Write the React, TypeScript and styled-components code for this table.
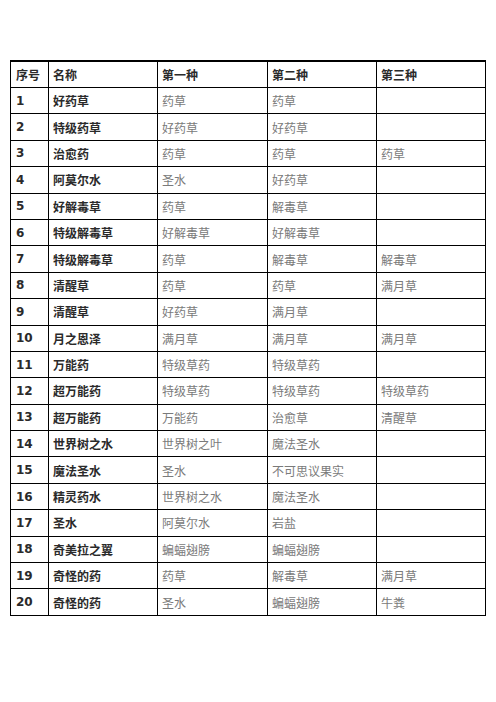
import React from 'react';
import styled, {createGlobalStyle} from 'styled-components';

const GlobalStyle = createGlobalStyle`
    html, body {
        margin:0;
        padding:0;
        background:#fff;
    }
    body {
        font-family:"DejaVu Sans", "Noto Sans CJK SC", sans-serif;
    }
`;

const Page = styled.div`
    padding:60px 0 0 10px;
    width:496px;
    height:702px;
    box-sizing:border-box;
`;

const Sheet = styled.div`
    display:grid;
    grid-template-columns:38px 109px 110px 109px 109px;
    grid-template-rows:26px;
    grid-auto-rows:26.4px;
    width:max-content;
    border-left:1px solid #000;
    border-top:2px solid #000;
`;

const Cell = styled.div<{kind:'head'|'key'|'plain'}>`
    display:flex;
    align-items:center;
    box-sizing:border-box;
    padding:0 0 0 4px;
    border-right:1px solid #000;
    border-bottom:1px solid #000;
    font-size:12px;
    white-space:nowrap;
    overflow:hidden;
    font-weight:${({kind})=> kind==='plain' ? 400 : 700};
    color:${({kind})=> kind==='plain' ? '#7a7a7a' : '#2a2a2a'};
`;

const NumCell = styled(Cell)`
    padding-left:5px;
`;

const headers = ['序号','名称','第一种','第二种','第三种'];

const rows:[string,string,string,string][] = [
    ['好药草','药草','药草',''],
    ['特级药草','好药草','好药草',''],
    ['治愈药','药草','药草','药草'],
    ['阿莫尔水','圣水','好药草',''],
    ['好解毒草','药草','解毒草',''],
    ['特级解毒草','好解毒草','好解毒草',''],
    ['特级解毒草','药草','解毒草','解毒草'],
    ['清醒草','药草','药草','满月草'],
    ['清醒草','好药草','满月草',''],
    ['月之恩泽','满月草','满月草','满月草'],
    ['万能药','特级草药','特级草药',''],
    ['超万能药','特级草药','特级草药','特级草药'],
    ['超万能药','万能药','治愈草','清醒草'],
    ['世界树之水','世界树之叶','魔法圣水',''],
    ['魔法圣水','圣水','不可思议果实',''],
    ['精灵药水','世界树之水','魔法圣水',''],
    ['圣水','阿莫尔水','岩盐',''],
    ['奇美拉之翼','蝙蝠翅膀','蝙蝠翅膀',''],
    ['奇怪的药','药草','解毒草','满月草'],
    ['奇怪的药','圣水','蝙蝠翅膀','牛粪'],
];

const App:React.FC = () => {
    return <>
        <GlobalStyle />
        <Page>
            <Sheet>
                {headers.map((h,i)=>
                    i===0
                        ? <NumCell key={h} kind="head">{h}</NumCell>
                        : <Cell key={h} kind="head">{h}</Cell>
                )}
                {rows.map((r,i)=>
                    <React.Fragment key={i}>
                        <NumCell kind="key">{i+1}</NumCell>
                        <Cell kind="key">{r[0]}</Cell>
                        <Cell kind="plain">{r[1]}</Cell>
                        <Cell kind="plain">{r[2]}</Cell>
                        <Cell kind="plain">{r[3]}</Cell>
                    </React.Fragment>
                )}
            </Sheet>
        </Page>
    </>;
}

export default App;
